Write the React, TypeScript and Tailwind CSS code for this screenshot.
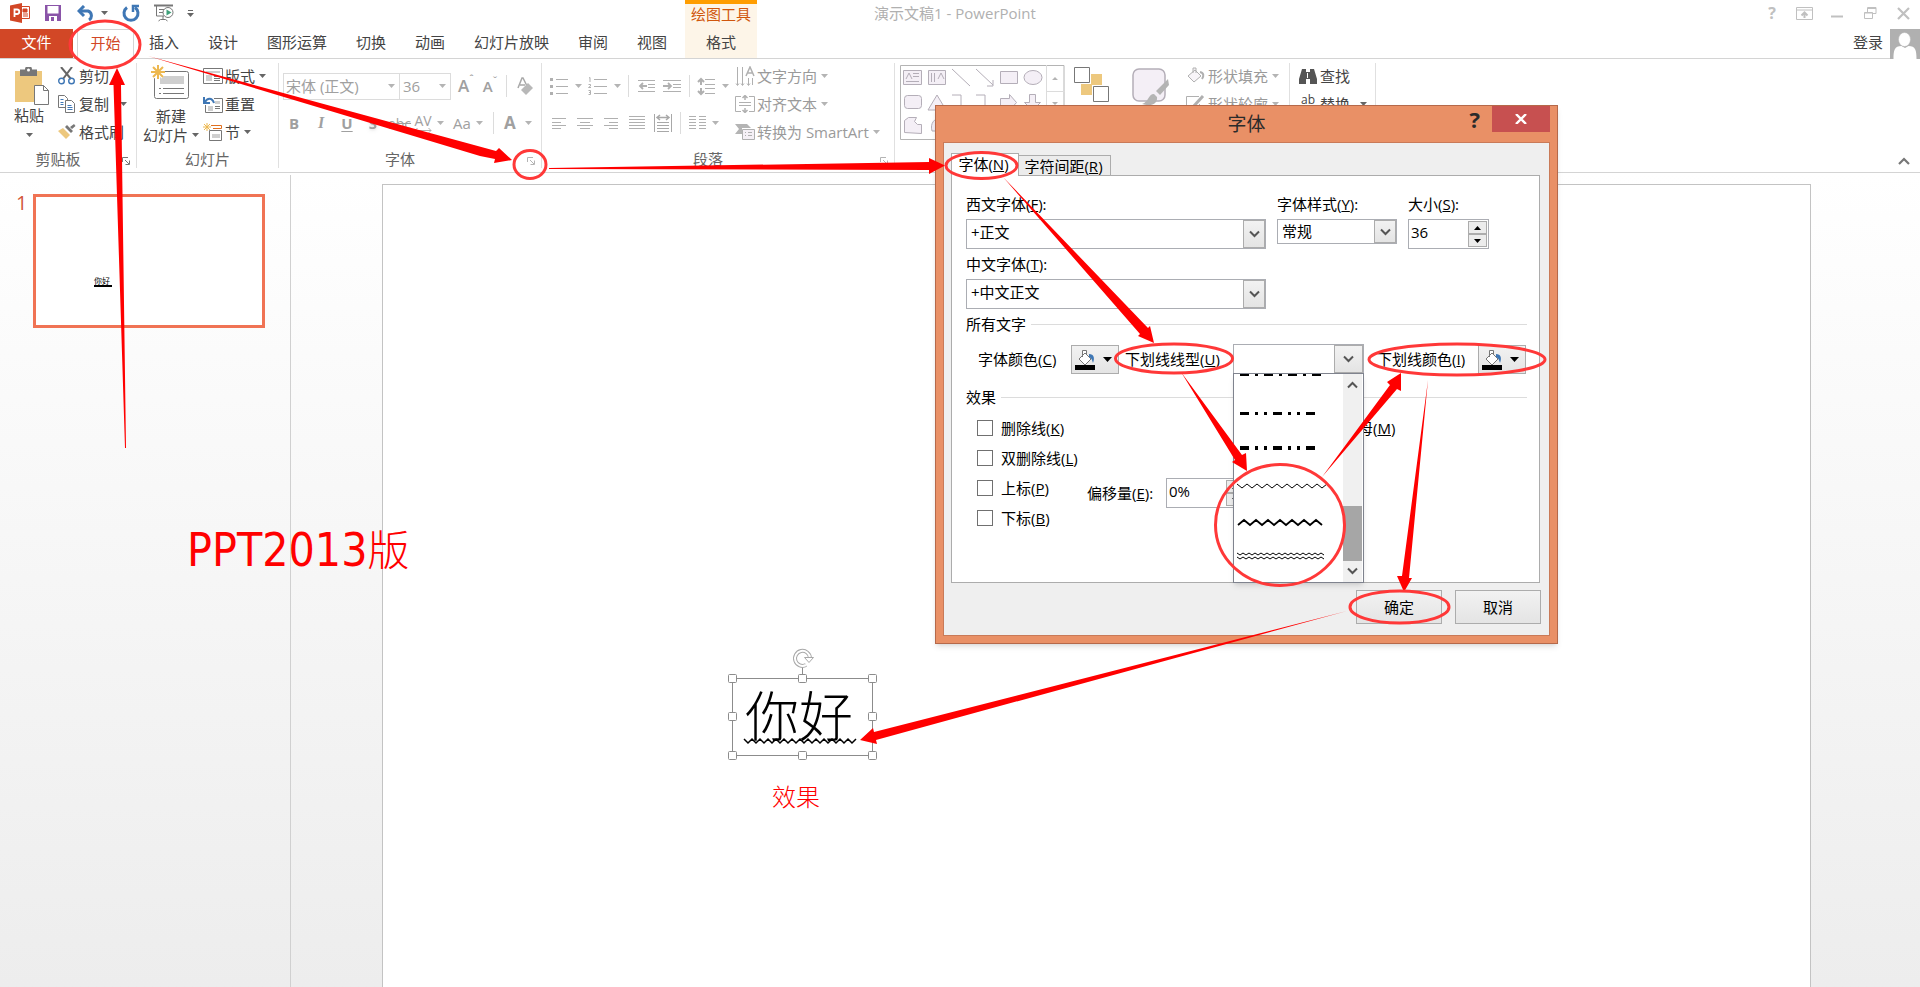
import type { ReactNode } from "react";

const tabs = ["插入", "设计", "图形运算", "切换", "动画", "幻灯片放映", "审阅", "视图"];

const Caret = ({ className = "text-[#666666]" }: { className?: string }) => (
  <svg width="7" height="4" className={`shrink-0 ${className}`}>
    <path d="M0 0h7L3.5 4z" fill="currentColor" />
  </svg>
);

const Chevron = () => (
  <svg width="11" height="8" fill="none" stroke="#555" strokeWidth="2">
    <path d="M1 1.500 5.500 6 10 1.500" />
  </svg>
);

const Separator = () => <div className="my-1 w-px shrink-0 bg-[#e0e0e0]" />;

const MiniSeparator = ({ className = "" }: { className?: string }) => (
  <div className={`h-[22px] w-px shrink-0 bg-[#dcdcdc] ${className}`} />
);

const Launcher = ({ light }: { light?: boolean }) => (
  <button
    aria-label="更多选项"
    className={`w-5 shrink-0 pt-1 pl-[6px] ${light ? "text-[#b4b4b4]" : "text-[#777777]"}`}
  >
    <svg width="8" height="8" fill="none" stroke="currentColor">
      <path d="M.5 5V.5H6M3 3l4 4M7.500 3.500v4h-4" />
    </svg>
  </button>
);

interface GroupProps {
  label?: string;
  className: string;
  launcher?: boolean;
  light?: boolean;
  children: ReactNode;
}

const Group = ({ label, className, launcher, light, children }: GroupProps) => (
  <section className={`flex shrink-0 flex-col pt-[3px] ${className}`}>
    <div className="flex h-[84px]">{children}</div>
    {label && (
      <div className="flex h-[26px] items-center text-[#666666]">
        <span className="flex-1 text-center">{label}</span>
        {launcher && <Launcher light={light} />}
      </div>
    )}
  </section>
);

interface RowButtonProps {
  icon: ReactNode;
  text: string;
  caret?: boolean;
  light?: boolean;
  caretGap?: string;
}

const RowButton = ({ icon, text, caret, light, caretGap = "ml-1" }: RowButtonProps) => (
  <button
    className={`flex h-7 items-center whitespace-nowrap ${
      light ? "text-[#9a9a9a]" : "text-[#444444]"
    }`}
  >
    <span className="mr-[2px] flex w-5 shrink-0 justify-center">{icon}</span>
    {text}
    {caret && (
      <Caret className={`${caretGap} ${light ? "text-[#b4b4b4]" : "text-[#666666]"}`} />
    )}
  </button>
);

const Lines = ({ rows, w = 16 }: { rows: number[][]; w?: number }) => (
  <svg width={w} height="20" stroke="#b0b0b0" strokeWidth="1" className="shrink-0">
    {rows.map(([x1, x2, y], i) => (
      <path key={i} d={`M${x1} ${y + 0.5}H${x2}`} />
    ))}
  </svg>
);

const TitleBar = () => (
  <header className="flex h-[29px]">
    <div className="flex flex-1">
      <div className="flex w-[685px] items-center pb-[3px] pl-[10px]">
        <svg width="20" height="20" viewBox="0 0 20 20">
          <path d="M11 3.500h8.500v12H11" fill="#fff" stroke="#d24726" />
          <path d="M13 6h4v3h-4zM13 11h5M13 13h5" fill="#d24726" stroke="#d24726" />
          <path d="M0 2.500 12 0v20L0 17.500z" fill="#d24726" />
          <path d="M4.500 14V6.500H7a2 2 0 0 1 0 4.500H4.500" fill="none" stroke="#fff" strokeWidth="1.800" />
        </svg>
        <svg width="16" height="16" className="ml-[15px]">
          <path d="M0 0h16v16H0z" fill="#8a54a8" />
          <path d="M2.500 1h11v7.500h-11zM4 11h8v5H4z" fill="#fff" />
          <path d="M6 12h3v4H6z" fill="#8a54a8" />
        </svg>
        <svg width="19" height="16" className="ml-4" fill="none" stroke="#3f77b5" strokeWidth="3">
          <path d="M2 6h9a5 5 0 0 1 1 9" />
          <path d="M7 1 2 6l5 5" />
        </svg>
        <Caret className="ml-[5px] text-[#666666]" />
        <svg width="18" height="18" className="ml-[14px]" fill="none" stroke="#3f77b5" strokeWidth="3">
          <path d="M5 3.500a7 7 0 1 0 8 0" />
          <path d="M17 2h-6v6" strokeWidth="2.500" />
        </svg>
        <svg width="20" height="18" className="ml-[14px]" fill="none" stroke="#777">
          <path d="M0 1.500h19" strokeWidth="2" />
          <path d="M2.500 2v10H10M5 5.500h5M5 8.500h4M9 12v4M4.500 17l2-1.500h5l2 1.500" />
          <circle cx="14" cy="8.500" r="5" fill="#fff" />
          <path d="M12.500 5.500v6l5-3z" fill="#3fa07a" stroke="none" />
        </svg>
        <svg width="7" height="9" className="ml-[13px]">
          <path d="M1 1.500h5" stroke="#666" />
          <path d="M0 4h7L3.500 8z" fill="#666" />
        </svg>
      </div>
      <div className="flex w-[72px] justify-center border-t-4 border-[#ff9d00] bg-[#fdf5e8] leading-5 text-[#d0560c]">
        绘图工具
      </div>
    </div>
    <h1 className="leading-[26px] text-[#b0b0b0]">演示文稿1 - PowerPoint</h1>
    <div className="flex flex-1 items-center justify-end pr-[10px] pb-[3px] text-[#c0c0c0]">
      <button aria-label="帮助" className="text-[16px] leading-4 font-bold">
        ?
      </button>
      <button aria-label="功能区显示选项" className="ml-[20px]">
        <svg width="17" height="13" fill="none" stroke="currentColor">
          <path d="M.5.500h16v12H.500zM.5 3h16" />
          <path d="M8.500 11V6M5.500 8.500l3-3 3 3" strokeWidth="2" />
        </svg>
      </button>
      <button aria-label="最小化" className="ml-[18px]">
        <svg width="13" height="13">
          <path d="M0 9.500h12" stroke="currentColor" strokeWidth="2" />
        </svg>
      </button>
      <button aria-label="还原" className="ml-[20px]">
        <svg width="13" height="13" fill="none" stroke="currentColor">
          <path d="M.5 5.500h8v6h-8zM.5 6h8M3.500 5V.500h8.500v6H9M4 1.500h8" />
        </svg>
      </button>
      <button aria-label="关闭" className="ml-[20px]">
        <svg width="13" height="13" stroke="currentColor" strokeWidth="2.200">
          <path d="m1 1 11 11M12 1 1 12" />
        </svg>
      </button>
    </div>
  </header>
);

const TabRow = () => (
  <nav className="flex h-[30px] border-b border-[#d4d4d4] leading-6 text-[#444444]">
    <button className="w-[73px] bg-[#d24726] pb-[3px] text-white">文件</button>
    <button className="mr-[15px] ml-1 h-[30px] w-[57px] border border-b-0 border-[#d4d4d4] bg-white pb-1 text-[#d24726]">
      开始
    </button>
    <div className="flex w-[536px] gap-[29px] pb-[3px]">
      {tabs.map((tab) => (
        <button key={tab} className="whitespace-nowrap">
          {tab}
        </button>
      ))}
    </div>
    <button className="w-[72px] bg-[#fdf5e8] pb-[3px]">格式</button>
    <div className="flex-1" />
    <button className="mr-[7px] pb-[3px]">登录</button>
    <svg width="30" height="30">
      <path d="M0 0h30v30H0z" fill="#b0b0b0" />
      <path d="M3.500 30c0-9 1-13 8-13l3.500 2 3.500-2c7 0 8 4 8 13z" fill="#fff" />
      <ellipse cx="14.500" cy="10.500" rx="6" ry="7" fill="#fff" stroke="#b0b0b0" strokeWidth=".5" />
    </svg>
  </nav>
);

const ClipboardGroup = () => (
  <Group label="剪贴板" launcher className="w-[136px]">
    <button className="ml-[14px] flex w-9 flex-col items-center pt-[5px] text-[#444444]">
      <svg width="36" height="38">
        <path d="M1 4h27v31H1z" fill="#edc87e" />
        <path d="M6 2.500h5a3.500 3.500 0 0 1 7 0h5V9H6z" fill="#777" />
        <circle cx="14.500" cy="3" r="1.500" fill="#fff" />
        <path d="M20.500 18.500h9l5 5v14h-14z" fill="#fff" stroke="#777" />
        <path d="M29.500 18.500v5h5" fill="none" stroke="#777" />
      </svg>
      <span className="mr-[6px] leading-5">粘贴</span>
      <Caret className="mt-2 mr-[6px] text-[#666666]" />
    </button>
    <div className="ml-[7px]">
      <RowButton
        text="剪切"
        icon={
          <svg width="18" height="18" fill="none">
            <path d="m3 0 10 12M14 0 5 12" stroke="#666" strokeWidth="2" />
            <circle cx="3.500" cy="14" r="2.800" stroke="#3f77b5" strokeWidth="1.400" />
            <circle cx="13.500" cy="14" r="2.800" stroke="#3f77b5" strokeWidth="1.400" />
          </svg>
        }
      />
      <RowButton
        text="复制"
        caret
        caretGap="ml-[11px]"
        icon={
          <svg width="18" height="18" fill="#fff" stroke="#777">
            <path d="M.5.500h6l3 3v9h-9z" />
            <path d="M7.500 5.500h6l3 3v9h-9z" />
            <path d="M2.500 4.500h3M2.500 7.500h3M2.500 9.500h3M9.500 10.500h4M9.500 12.500h5M9.500 14.500h5" stroke="#3f77b5" />
          </svg>
        }
      />
      <RowButton
        text="格式刷"
        icon={
          <svg width="18" height="16">
            <path d="m0 7 5-3 7 7-4 4z" fill="#edc87e" />
            <path d="m7 3 6 6 2-2-6-6zM12 3l4-3 1.500 2L14 5z" fill="#777" />
          </svg>
        }
      />
    </div>
  </Group>
);

const SlidesGroup = () => (
  <Group label="幻灯片" className="w-[141px]">
    <button className="ml-[6px] flex w-[56px] flex-col items-center pt-[3px] text-[#444444]">
      <svg width="40" height="35">
        <rect x="3.500" y="6.500" width="34" height="27" rx="2" fill="#fff" stroke="#777" />
        <path d="M9 11h24v8H9z" fill="#cfcfcf" />
        <path d="M8 23.500h2M12 23.500h21M8 28.500h2M12 28.500h21" stroke="#777" />
        <path d="M7 0v14M0 7h14M2 2l10 10M12 2 2 12" stroke="#fff" strokeWidth="4" />
        <path d="M7 0v14M0 7h14M2 2l10 10M12 2 2 12" stroke="#edb850" strokeWidth="2" />
      </svg>
      <span className="mt-[6px] leading-5">新建</span>
      <span className="flex items-center gap-1 leading-[18px] whitespace-nowrap">
        幻灯片
        <Caret />
      </span>
    </button>
    <div className="ml-1">
      <RowButton
        text="版式"
        caret
        icon={
          <svg width="20" height="16" fill="none" stroke="#777">
            <path d="M.5.500h19v15H.500z" />
            <path d="M3 3h14v2H3zM3 7h6v6H3z" fill="#cfcfcf" stroke="none" />
            <path d="M11 8.500h6M11 10.500h6M11 12.500h6" />
          </svg>
        }
      />
      <RowButton
        text="重置"
        icon={
          <svg width="20" height="17" fill="none" stroke="#777">
            <path d="M11 2.500h8.500v14h-17V9" />
            <path d="M5 10h5v5H5zM12 5h5v3h-5z" fill="#cfcfcf" stroke="none" />
            <path d="M12 10.500h5M12 12.500h5" />
            <path d="M2 6c2-4 7-5 9 1M1 1v6h6" stroke="#3f77b5" strokeWidth="2" />
          </svg>
        }
      />
      <RowButton
        text="节"
        caret
        icon={
          <svg width="20" height="18" fill="none" stroke="#777">
            <path d="M8 2.500h10.500v3H10" stroke="#e07020" />
            <path d="M6.500 7.500h12v10h-12z" />
            <path d="M9 11h8v4H9z" fill="#cfcfcf" stroke="none" />
            <path d="M4 0v8M0 4h8M1 1l6 6M7 1 1 7" stroke="#edb850" />
          </svg>
        }
      />
    </div>
  </Group>
);

const FontGroup = () => (
  <Group label="字体" launcher light className="w-[262px]">
    <div className="flex flex-1 flex-col gap-[9px] pt-[10px] pl-1 text-[#a0a0a0]">
      <div className="flex h-7 items-center">
        <button className="flex h-[27px] w-[117px] items-center justify-between border border-[#dcdcdc] pr-1 pl-[2px]">
          宋体 (正文)
          <Caret className="text-[#b4b4b4]" />
        </button>
        <button className="flex h-[27px] w-[51px] items-center justify-between border border-l-0 border-[#dcdcdc] pr-1 pl-[3px]">
          36
          <Caret className="text-[#b4b4b4]" />
        </button>
        <button className="ml-[7px] flex text-[17px] font-semibold">
          A<span className="text-[10px] leading-3">ˆ</span>
        </button>
        <button className="ml-[9px] flex text-[15px] font-semibold">
          A<span className="text-[10px] leading-3">ˇ</span>
        </button>
        <MiniSeparator className="ml-[9px]" />
        <svg width="17" height="20" className="ml-[10px]">
          <path d="m1 12 4-10h1l4 8M3 9h5" fill="none" stroke="#a8a8a8" strokeWidth="1.500" />
          <path d="m4 14 7-7 5 5-7 7z" fill="#b8b8b8" />
        </svg>
      </div>
      <div className="flex h-7 items-center font-bold">
        <button className="ml-[6px] w-[10px]">B</button>
        <button className="ml-[17px] w-[10px] font-['Liberation_Serif',serif] text-[16px] italic">I</button>
        <button className="ml-[15px] w-3 underline underline-offset-2">U</button>
        <button className="ml-[14px] w-3 drop-shadow">S</button>
        <button className="ml-[9px] text-[14px] font-normal line-through">abc</button>
        <button className="ml-[3px] flex flex-col items-center text-[14px] leading-[14px] font-normal">
          AV
          <svg width="18" height="5" fill="none" stroke="#b0b0b0">
            <path d="M1 2.500h16M3.500 0 1 2.500 3.500 5M14.500 0 17 2.500 14.500 5" />
          </svg>
        </button>
        <Caret className="ml-[5px] text-[#b4b4b4]" />
        <button className="ml-[9px] font-normal">Aa</button>
        <Caret className="ml-[5px] text-[#b4b4b4]" />
        <MiniSeparator className="ml-[10px]" />
        <button className="ml-[10px] text-[17px]">A</button>
        <Caret className="ml-[9px] text-[#b4b4b4]" />
      </div>
    </div>
  </Group>
);

const ParagraphGroup = () => (
  <Group label="段落" launcher light className="w-[352px]">
    <div className="flex w-[187px] shrink-0 flex-col gap-[9px] pt-[10px] pl-2">
      <div className="flex h-7 items-center">
        <svg width="18" height="18" stroke="#b0b0b0">
          <path d="M6 2.500h12M6 9.500h12M6 16.500h12" />
          <path d="M0 2.500h3M0 9.500h3M0 16.500h3" strokeWidth="3" />
        </svg>
        <Caret className="ml-[7px] text-[#b4b4b4]" />
        <svg width="19" height="18" className="ml-[6px]" fill="none" stroke="#b0b0b0">
          <path d="M6 2.500h13M6 9.500h13M6 16.500h13M1 1l1-.5V5M.5 7.500h2v1.500l-2 1.500H3M.5 13.500h2v4h-2M1 15.500h1" />
        </svg>
        <Caret className="ml-[7px] text-[#b4b4b4]" />
        <MiniSeparator className="ml-[7px]" />
        <svg width="18" height="12" className="ml-[9px]" fill="none" stroke="#b0b0b0">
          <path d="M0 .5h18M10 4.500h8M10 7.500h8M0 11.500h18" />
          <path d="M9 6H2M5 3 2 6l3 3" strokeWidth="1.800" />
        </svg>
        <svg width="18" height="12" className="ml-[8px]" fill="none" stroke="#b0b0b0">
          <path d="M0 .5h18M10 4.500h8M10 7.500h8M0 11.500h18" />
          <path d="M0 6h8M5 3l3 3-3 3" strokeWidth="1.800" />
        </svg>
        <MiniSeparator className="ml-[8px]" />
        <svg width="18" height="19" className="ml-[7px]" fill="none" stroke="#b0b0b0">
          <path d="M8 2.500h10M8 7.500h10M8 11.500h10M8 16.500h10" />
          <path d="M4 2v6M1 5l3-3 3 3M4 11v6M1 14l3 3 3-3" strokeWidth="2" />
        </svg>
        <Caret className="ml-[7px] text-[#b4b4b4]" />
      </div>
      <div className="flex h-7 items-center pl-[2px]">
        <Lines rows={[[0, 14, 5], [0, 9, 9], [0, 14, 12], [0, 9, 15]]} />
        <span className="ml-[9px] flex">
          <Lines rows={[[0, 16, 5], [3, 13, 9], [0, 16, 12], [3, 13, 15]]} />
        </span>
        <span className="ml-[11px] flex">
          <Lines w={14} rows={[[0, 14, 5], [5, 14, 9], [0, 14, 12], [5, 14, 15]]} />
        </span>
        <span className="ml-[11px] flex">
          <Lines rows={[[0, 16, 3], [0, 16, 6], [0, 16, 9], [0, 16, 12], [0, 16, 15]]} />
        </span>
        <svg width="18" height="20" className="ml-[9px] shrink-0" fill="none" stroke="#a8a8a8">
          <path d="M.5 1v18M17.500 1v18M3 9.500h12M3 12.500h12M3 15.500h12M3 18.500h12" />
          <path d="M3 4.500h12M6 2 3 4.500 6 7M12 2l3 2.500L12 7" strokeWidth="1.500" />
        </svg>
        <MiniSeparator className="ml-[8px]" />
        <span className="ml-[8px] flex">
          <Lines
            w={17}
            rows={[[0, 7, 3], [0, 7, 6], [0, 7, 9], [0, 7, 12], [0, 7, 15], [10, 17, 3], [10, 17, 6], [10, 17, 9], [10, 17, 12], [10, 17, 15]]}
          />
        </span>
        <Caret className="ml-[6px] text-[#b4b4b4]" />
      </div>
    </div>
    <div className="ml-[6px]">
      <RowButton
        light
        caret
        text="文字方向"
        icon={
          <svg width="20" height="20" fill="none" stroke="#b0b0b0">
            <path d="M2.500 1v18M7.500 1v18M13.500 12v7M17.500 12v7M1 17.500l1.500 2 1.500-2M6 17.500l1.500 2 1.500-2M12 17.500l1.500 2 1.500-2" />
            <path d="m11 10 4-9 4 9M12.500 7h5" strokeWidth="1.500" />
          </svg>
        }
      />
      <RowButton
        light
        caret
        text="对齐文本"
        icon={
          <svg width="20" height="18" fill="none" stroke="#b0b0b0">
            <path d="M6 1.500H.500v15H6M14 1.500h5.500v15H14M4 7.500h12M4 10.500h12" />
            <path d="M10 0v5M7.500 3 10 .5 12.500 3M10 13v5M7.500 15l2.500 2.500 2.500-2.500" strokeWidth="1.500" />
          </svg>
        }
      />
      <RowButton
        light
        caret
        text="转换为 SmartArt"
        icon={
          <svg width="20" height="16">
            <path d="M0 0h12l4 4H7v6H0l4-5z" fill="#b4b4b4" />
            <path d="M7.500 5.500h12v10h-12z" fill="#f5f0f6" stroke="#b0b0b0" />
            <path d="M10 8.500h1M13 8.500h4M10 11.500h1M13 11.500h4" stroke="#b0b0b0" />
          </svg>
        }
      />
    </div>
  </Group>
);

const DrawingGroup = () => (
  <Group className="w-[394px]">
    <svg width="165" height="75" className="mt-[3px] ml-[5px] shrink-0" fill="none" stroke="#b4aeb8">
      <path d="M.5.500h163.500v74H.500z" stroke="#b4b4b4" />
      <path d="M146.500 0v75M147 26.500h18M147 50.500h18" stroke="#dcdcdc" />
      <path d="M152 15h6l-3-3zM152 37h6l-3 3z" fill="#b4b4b4" stroke="none" />
      <g fill="#f4eff6">
        <path d="M3.500 5.500h18v14h-18zM28.500 5.500h17v14h-17zM100.500 6.500h17v12h-17z" />
        <ellipse cx="133" cy="12.500" rx="9" ry="7" />
        <rect x="4.500" y="30.500" width="17" height="13" rx="3" />
        <path d="M28 45 37 30l9 15zM100.500 33.500h9v-4l7 8-7 8v-4h-9zM129.500 29.500h6v8h5l-8 8-8-8h5z" />
        <path d="M4.500 67.500v-12l4-3h8l-2 4 3 3h4v9zM32 66c-2-8 2-12 9-14v14z" />
      </g>
      <path d="M6 14 9 8l3 6M13 8.500h6M13 11.500h6M6 16.500h13M31.500 8v9M34.500 8v9M38 14l3-6 3 6M52 4l18 17M76 4l17 16M93 15v6h-6M52 30h9v14h9M76 30h9v14h9" />
    </svg>
    <svg width="36" height="36" className="mt-[5px] ml-[9px] shrink-0">
      <path d="M17 7h11v11H17zM7 17h11v11H7z" fill="#edc87e" />
      <path d="M.5.500h15v15H.500zM19.500 19.500h15v15h-15z" fill="#fff" stroke="#777" />
    </svg>
    <svg width="38" height="38" className="mt-[6px] ml-[22px] shrink-0">
      <rect x="1" y="1" width="32" height="32" rx="6" fill="#f4eff6" stroke="#b4aeb8" strokeWidth="1.500" />
      <path d="m36 11-12 12 4 4 9-10zM22 26c-6 0-5 8-12 10 8 3 16 0 15-7z" fill="#b4b4b4" />
    </svg>
    <div className="ml-4">
      <RowButton
        light
        caret
        text="形状填充"
        icon={
          <svg width="18" height="18" fill="#f8f5f9" stroke="#b0b0b0">
            <path d="m1 9 7-6 6 6-7 6zM6 6V1h3v5" />
            <path d="M13 5c4 1 4 4 2 7" strokeWidth="2" fill="none" />
          </svg>
        }
      />
      <RowButton
        light
        caret
        text="形状轮廓"
        icon={
          <svg width="20" height="18" fill="none" stroke="#b0b0b0">
            <path d="M13 1.500H.500v14h13V9" />
            <path d="M17 1 7 12" strokeWidth="3" />
          </svg>
        }
      />
    </div>
  </Group>
);

const EditingGroup = () => (
  <Group className="w-[85px]">
    <div className="ml-2">
      <RowButton
        text="查找"
        icon={
          <svg width="18" height="17" fill="#555">
            <path d="M3 1h4v3h4V1h4l3 10v5h-7v-5H7v5H0v-5z" />
            <path d="M8.500 5v5" stroke="#fff" />
          </svg>
        }
      />
      <RowButton
        text="替换"
        caret
        caretGap="ml-[10px]"
        icon={<span className="mb-2 text-[12px] leading-3">ab</span>}
      />
    </div>
  </Group>
);

const Ribbon = () => (
  <div className="flex h-[114px] border-b border-[#d4d4d4]">
    <ClipboardGroup />
    <Separator />
    <SlidesGroup />
    <Separator />
    <FontGroup />
    <Separator />
    <ParagraphGroup />
    <Separator />
    <DrawingGroup />
    <Separator />
    <EditingGroup />
    <Separator />
    <button aria-label="折叠功能区" className="mt-auto mr-[10px] mb-[7px] ml-auto">
      <svg width="12" height="8" fill="none" stroke="#777" strokeWidth="2.200">
        <path d="m1 7 5-5 5 5" />
      </svg>
    </button>
  </div>
);

const zigzag = (x: number, y: number, half: number, amp: number, count: number) => {
  let d = `M${x} ${y}`;
  for (let i = 1; i <= count; i++) {
    d += `L${x + i * half} ${i % 2 ? y + amp : y}`;
  }
  return d;
};

const SlideTextBox = () => (
  <div className="absolute top-[493px] left-[349px] h-[78px] w-[141px]">
    <p className="pt-1 pl-[13px] text-[54px] leading-[68px] font-light">你好</p>
    <svg width="161" height="120" className="absolute -top-8 -left-[10px]" fill="none" stroke="#8c8c8c">
      <path d="M10.500 32.500h140v77h-140zM80.500 32V20" />
      <g fill="#fff">
        {[10.5, 80.5, 150.5].map((x) =>
          [32.5, 70.5, 109.5].map((y) =>
            x === 80.5 && y === 70.5 ? null : (
              <rect key={`${x}-${y}`} x={x - 4} y={y - 4} width="8" height="8" rx="1" />
            )
          )
        )}
      </g>
      <path d="M88 12a7.500 7.500 0 1 0-4 7" stroke="#a8a8a8" strokeWidth="4" />
      <path d="M88 12a7.500 7.500 0 1 0-4 7" stroke="#fff" strokeWidth="2" />
      <path d="M82.500 11.500h9l-4.500 5z" fill="#fff" stroke="#a8a8a8" />
      <path d={zigzag(22, 93, 4, 4, 28)} stroke="#000" strokeWidth="1.500" />
    </svg>
  </div>
);

const Workspace = () => (
  <main className="flex flex-1 bg-linear-to-b from-white to-[#ededed]">
    <aside className="mt-[2px] flex w-[291px] shrink-0 border-r border-[#d0d0d0] pt-[19px] pl-4">
      <span className="w-[17px] text-[20px] leading-[18px] text-[#d2573a]">1</span>
      <div className="h-[134px] w-[232px] border-[3px] border-[#f07354] bg-white pt-[79px] pl-[58px]">
        <p className="w-[18px] border-b-2 border-black text-[8px] leading-[9px]">你好</p>
      </div>
    </aside>
    <div className="flex flex-1 pt-[11px] pr-[109px] pl-[91px]">
      <div className="relative flex-1 border border-b-0 border-[#c3c3c3] bg-white">
        <SlideTextBox />
        <p className="absolute top-[596px] left-[389px] text-[24px] leading-8 font-light text-[#ff0000]">效果</p>
      </div>
    </div>
  </main>
);

interface SelectBoxProps {
  id: string;
  options: string[];
  className: string;
  chevronClass?: string;
  children?: ReactNode;
}

const SelectBox = ({ id, options, className, chevronClass = "w-[22px]", children }: SelectBoxProps) => (
  <div className={`relative flex shrink-0 border border-[#abadb3] bg-white ${className}`}>
    <select id={id} className="w-full appearance-none pb-1 pl-1 outline-none">
      {options.map((option) => (
        <option key={option}>{option}</option>
      ))}
    </select>
    <span
      className={`pointer-events-none absolute inset-y-0 right-0 flex items-center justify-center border border-[#acacac] bg-linear-to-b from-[#f2f2f2] to-[#e4e4e4] ${chevronClass}`}
    >
      <Chevron />
    </span>
    {children}
  </div>
);

const Spinner = ({ id, value }: { id: string; value: string }) => (
  <div className="flex h-[30px] w-[81px] shrink-0 border border-[#abadb3] bg-white p-px">
    <input id={id} defaultValue={value} className="min-w-0 flex-1 pb-[3px] pl-[1px] outline-none" />
    <div className="flex w-[19px] flex-col">
      <button aria-label="增加" className="flex flex-1 items-center justify-center border border-[#acacac] bg-[#ececec]">
        <svg width="7" height="4">
          <path d="M0 4h7L3.500 0z" />
        </svg>
      </button>
      <button aria-label="减少" className="flex flex-1 items-center justify-center border border-[#acacac] bg-[#ececec]">
        <svg width="7" height="4">
          <path d="M0 0h7L3.500 4z" />
        </svg>
      </button>
    </div>
  </div>
);

const ColorButton = ({ label }: { label: string }) => (
  <button
    aria-label={label}
    className="flex h-[29px] w-12 shrink-0 items-center gap-[7px] border border-[#acacac] bg-linear-to-b from-[#f2f2f2] to-[#e4e4e4] pl-[3px]"
  >
    <svg width="21" height="21">
      <path d="m4 10 6-6 6 6-6 6zM7.500 8V1.500h4V6" fill="#fff" stroke="#777" />
      <path d="M14 5c5 0 6 4 4 9-1-4-2-5-4-6z" fill="#3f77b5" />
      <path d="M0 16h20v5H0z" />
    </svg>
    <svg width="9" height="5">
      <path d="M0 0h9L4.500 5z" />
    </svg>
  </button>
);

const dashes = [[6, 9], [21, 3], [30, 3], [39, 9], [54, 3], [63, 3], [72, 9]];
const dashesTop = [[6, 9], [21, 3], [30, 9], [45, 3], [54, 9], [69, 3], [78, 9]];

const UnderlineList = () => (
  <div className="absolute top-[28px] -left-px z-10 flex h-[210px] w-[131px] justify-between border border-[#7f838e] bg-white shadow-md">
    <svg width="100" height="208" fill="none" stroke="#000">
      {dashesTop.map(([x, w]) => (
        <rect key={x} x={x} y="0" width={w} height="2" fill="#000" stroke="none" />
      ))}
      {dashes.map(([x, w]) => (
        <g key={x} fill="#000" stroke="none">
          <rect x={x} y="38" width={w} height="3" />
          <rect x={x} y="72" width={w} height="4" />
        </g>
      ))}
      <path d={zigzag(3, 110, 5, 4, 18)} />
      <path d={zigzag(4, 151, 6, -5, 14)} strokeWidth="1.800" />
      <path d={zigzag(3, 179, 3, 2, 29)} />
      <path d={zigzag(3, 183, 3, 2, 29)} />
    </svg>
    <div className="mr-px flex w-[19px] flex-col items-center justify-between bg-[#f0f0f0] py-[7px]">
      <svg width="11" height="8" fill="none" stroke="#555" strokeWidth="2">
        <path d="M1 6.500 5.500 2 10 6.500" />
      </svg>
      <div className="mt-auto mb-[6px] h-[55px] w-full bg-[#a6a6a6]" />
      <Chevron />
    </div>
  </div>
);

interface CheckProps {
  id: string;
  text: string;
  hotkey: string;
}

const CheckRow = ({ id, text, hotkey }: CheckProps) => (
  <div className="flex h-[30px] items-center gap-2">
    <input
      id={id}
      type="checkbox"
      className="size-4 shrink-0 appearance-none border border-[#707070] bg-white"
    />
    <label htmlFor={id} className="whitespace-nowrap">
      {text}(<u>{hotkey}</u>)
    </label>
  </div>
);

const SectionTitle = ({ text, className }: { text: string; className: string }) => (
  <div className={`flex items-center gap-[5px] leading-5 ${className}`}>
    {text}
    <div className="mr-3 h-px flex-1 bg-[#dcdcdc]" />
  </div>
);

const FontDialog = () => (
  <div
    role="dialog"
    aria-label="字体"
    className="absolute top-[105px] left-[935px] w-[623px] border border-[#b5694a] bg-[#e99066] px-[7px] pb-[7px] text-black shadow-md"
  >
    <div className="relative flex h-9 items-start justify-end">
      <h2 className="absolute inset-x-0 top-1 text-center text-[19px] leading-7 text-[#2b2b2b]">字体</h2>
      <button aria-label="帮助" className="relative mr-3 text-[22px] leading-[26px] font-bold text-[#2b2b2b]">
        ?
      </button>
      <button
        aria-label="关闭"
        className="relative flex h-[26px] w-[58px] items-center justify-center bg-[#c75050]"
      >
        <svg width="12" height="10" stroke="#fff" strokeWidth="2.400">
          <path d="m1 0 10 10M11 0 1 10" />
        </svg>
      </button>
    </div>
    <div className="border border-[#c97a58] bg-[#efefef] pt-[10px] pr-[9px] pb-[11px] pl-[7px]">
      <div className="flex h-[22px] items-end">
        <button className="relative z-10 -mb-px h-[23px] w-[68px] border border-b-0 border-[#acacac] bg-white pr-[3px] pb-[2px] leading-5">
          字体(<u>N</u>)
        </button>
        <button className="h-5 w-[92px] border border-b-0 border-l-0 border-[#acacac] bg-[#ececec] pr-[2px] leading-5">
          字符间距(<u>R</u>)
        </button>
      </div>
      <div className="border border-[#acacac] bg-white pt-[18px] pb-[49px] pl-[14px]">
        <div className="flex">
          <div className="w-[300px]">
            <label htmlFor="latin" className="mb-[5px] block leading-5">
              西文字体(<u>F</u>):
            </label>
            <SelectBox id="latin" options={["+正文"]} className="h-[30px]" />
          </div>
          <div className="ml-[11px] w-[120px]">
            <label htmlFor="style" className="mb-[5px] block leading-5">
              字体样式(<u>Y</u>):
            </label>
            <SelectBox id="style" options={["常规"]} className="h-[25px]" />
          </div>
          <div className="ml-[11px]">
            <label htmlFor="size" className="mb-[5px] block leading-5">
              大小(<u>S</u>):
            </label>
            <Spinner id="size" value="36" />
          </div>
        </div>
        <label htmlFor="cjk" className="mt-[5px] mb-[5px] block leading-5">
          中文字体(<u>T</u>):
        </label>
        <SelectBox id="cjk" options={["+中文正文"]} className="h-[30px] w-[300px]" />

        <SectionTitle text="所有文字" className="mt-[5px]" />
        <div className="mt-[10px] flex h-[30px] items-center pl-3">
          <span className="w-[93px]">
            字体颜色(<u>C</u>)
          </span>
          <ColorButton label="字体颜色" />
          <label htmlFor="underline" className="ml-[6px] w-[108px]">
            下划线线型(<u>U</u>)
          </label>
          <SelectBox id="underline" options={[""]} className="h-[30px] w-[131px]" chevronClass="w-[29px]">
            <UnderlineList />
          </SelectBox>
          <span className="ml-[13px] w-[101px]">
            下划线颜色(<u>I</u>)
          </span>
          <ColorButton label="下划线颜色" />
        </div>

        <SectionTitle text="效果" className="mt-[13px]" />
        <div className="mt-[6px] flex pl-[11px]">
          <div className="w-[110px]">
            <CheckRow id="strike" text="删除线" hotkey="K" />
            <CheckRow id="dstrike" text="双删除线" hotkey="L" />
            <CheckRow id="super" text="上标" hotkey="P" />
            <CheckRow id="sub" text="下标" hotkey="B" />
          </div>
          <div className="flex w-[172px] items-center pt-10">
            <label htmlFor="offset" className="w-[79px] shrink-0">
              偏移量(<u>E</u>):
            </label>
            <Spinner id="offset" value="0%" />
          </div>
          <CheckRow id="caps" text="小型大写字母" hotkey="M" />
        </div>
      </div>
      <div className="-mr-px mt-[7px] flex justify-end gap-[13px]">
        <button className="h-[34px] w-[86px] border border-[#acacac] bg-linear-to-b from-[#f2f2f2] to-[#e4e4e4]">
          确定
        </button>
        <button className="h-[34px] w-[86px] border border-[#acacac] bg-linear-to-b from-[#f2f2f2] to-[#e4e4e4]">
          取消
        </button>
      </div>
    </div>
  </div>
);

// red circles and arrows that walk through the steps
const Annotations = () => (
  <svg width="1920" height="987" className="pointer-events-none absolute top-0 left-0 z-20">
    <g fill="#ff0000">
      <path d="M126 448h-1L113.500 85h-4.500l8-17 8 17h-4z" />
      <path d="M148 56l348 95 3-3 13 12-18 3 1-4-15-3z" />
      <path d="M549 168l380-6v-4l16 7.500-16 8.500v-4l-380-1z" />
      <path d="m1003 177 145 151 2-2 4 17-16-7 2-2z" />
      <path d="m1181 372 61 83 4-2 1 18-15-9 3-2z" />
      <path d="m1322 477 68-92-3-3 14-9v18l-4-2z" />
      <path d="m1428 380-19 198h3l-8 14-7-16h5z" />
      <path d="m1347 611-471 129 1 4-17-4 13-12 1 4z" />
    </g>
    <g fill="none" stroke="#ff3838" strokeWidth="3">
      <ellipse cx="105" cy="44.500" rx="35" ry="23.500" />
      <ellipse cx="530" cy="164.500" rx="16" ry="14" />
      <ellipse cx="981.500" cy="165.500" rx="35.500" ry="13" />
      <ellipse cx="1174" cy="358.500" rx="58.500" ry="14.500" />
      <ellipse cx="1457" cy="359.500" rx="88" ry="15.500" />
      <ellipse cx="1280" cy="525" rx="64.500" ry="60.500" />
      <ellipse cx="1399.500" cy="607" rx="49.500" ry="16" />
    </g>
  </svg>
);

const App = () => {
  return (
    <div className="relative flex min-h-screen flex-col overflow-hidden bg-white font-['Open_Sans','Noto_Sans_CJK_SC',sans-serif] text-[15px]">
      <TitleBar />
      <TabRow />
      <Ribbon />
      <Workspace />
      <FontDialog />
      <Annotations />
      <p className="absolute top-[520px] left-[187px] z-20 flex items-center leading-[60px] text-[#ff0000]">
        <span className="font-['DejaVu_Sans_Condensed','DejaVu_Sans',sans-serif] text-[46px]">PPT2013</span>
        <span className="text-[42px] font-light">版</span>
      </p>
    </div>
  );
};

export default App;
